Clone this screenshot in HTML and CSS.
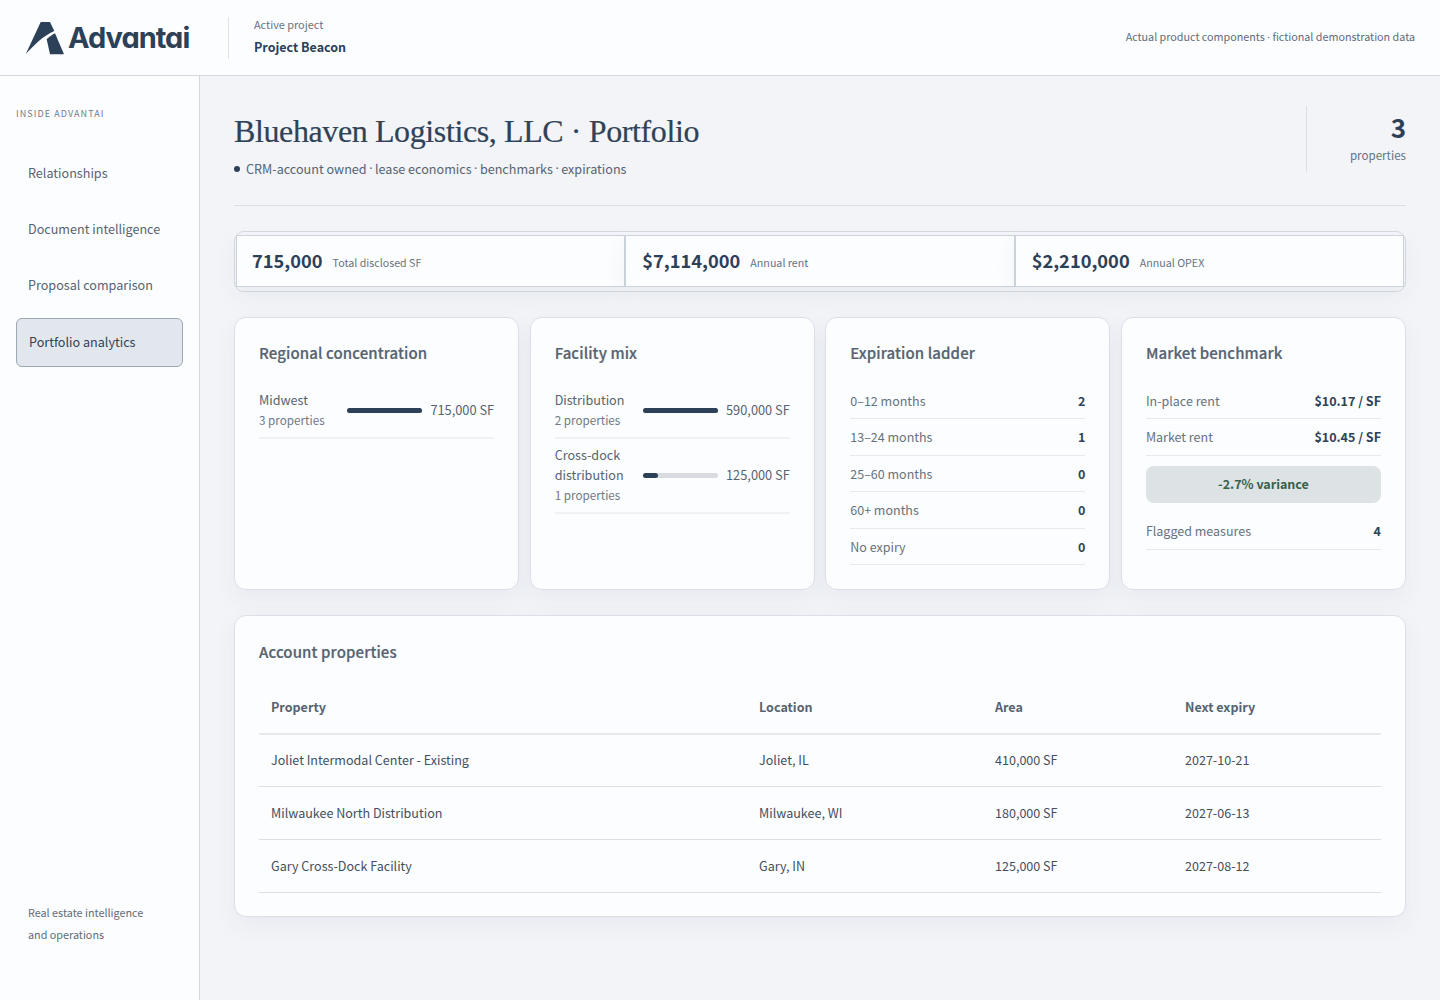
FILE: index.html
```html
<!DOCTYPE html>
<html lang="en">

<head>
  <meta charset="UTF-8">
  <title>Advantai - Portfolio analytics</title>
  <link rel="stylesheet" href="styles.css">
</head>

<body>
  <!-- Top bar -->
  <header class="topbar">
    <div class="logo">
      <svg class="logo-mark" width="40" height="34" viewBox="0 0 40 34">
        <path d="M0.700 33.300 L15.700 1 L25 1 L29.300 10 C18 15 9 24 0.700 33.300 Z" fill="#2c4058" />
        <path d="M30 12.300 L39 33.300 L25 33.300 L21.700 18.300 C24 16 27 14 30 12.300 Z" fill="#2c4058" />
      </svg>
      <span class="logo-text">Advantai</span>
    </div>
    <div class="project">
      <span class="project-label">Active project</span>
      <strong class="project-name">Project Beacon</strong>
    </div>
    <p class="topbar-note">Actual product components <span class="sep">·</span> fictional demonstration data</p>
  </header>

  <div class="layout">
    <!-- Side navigation -->
    <aside class="sidebar">
      <p class="nav-title">INSIDE ADVANTAI</p>
      <nav class="nav">
        <a class="nav-item">Relationships</a>
        <a class="nav-item">Document intelligence</a>
        <a class="nav-item">Proposal comparison</a>
        <a class="nav-item active">Portfolio analytics</a>
      </nav>
      <p class="sidebar-foot">Real estate intelligence<br>and operations</p>
    </aside>

    <main class="main">
      <section class="page-head">
        <div>
          <h1>Bluehaven Logistics, LLC · Portfolio</h1>
          <p class="subtitle"><span class="dot"></span>CRM-account owned <span class="sep">·</span> lease economics <span class="sep">·</span> benchmarks <span class="sep">·</span> expirations</p>
        </div>
        <div class="head-stat">
          <strong>3</strong>
          <span>properties</span>
        </div>
      </section>

      <!-- Totals strip -->
      <section class="totals">
        <div class="total"><strong>715,000</strong><span>Total disclosed SF</span></div>
        <div class="total"><strong>$7,114,000</strong><span>Annual rent</span></div>
        <div class="total"><strong>$2,210,000</strong><span>Annual OPEX</span></div>
      </section>

      <section class="cards">
        <div class="card">
          <h2>Regional concentration</h2>
          <div class="bar-row">
            <div class="bar-label">Midwest<small>3 properties</small></div>
            <div class="bar"><div class="bar-fill" style="width: 100%"></div></div>
            <div class="bar-value">715,000 SF</div>
          </div>
        </div>

        <div class="card">
          <h2>Facility mix</h2>
          <div class="bar-row">
            <div class="bar-label">Distribution<small>2 properties</small></div>
            <div class="bar"><div class="bar-fill" style="width: 100%"></div></div>
            <div class="bar-value">590,000 SF</div>
          </div>
          <div class="bar-row">
            <div class="bar-label">Cross-dock distribution<small>1 properties</small></div>
            <div class="bar"><div class="bar-fill" style="width: 21%"></div></div>
            <div class="bar-value">125,000 SF</div>
          </div>
        </div>

        <div class="card">
          <h2>Expiration ladder</h2>
          <div class="stat-row"><span>0–12 months</span><b>2</b></div>
          <div class="stat-row"><span>13–24 months</span><b>1</b></div>
          <div class="stat-row"><span>25–60 months</span><b>0</b></div>
          <div class="stat-row"><span>60+ months</span><b>0</b></div>
          <div class="stat-row"><span>No expiry</span><b>0</b></div>
        </div>

        <div class="card">
          <h2>Market benchmark</h2>
          <div class="stat-row"><span>In-place rent</span><b>$10.17 / SF</b></div>
          <div class="stat-row"><span>Market rent</span><b>$10.45 / SF</b></div>
          <div class="variance">-2.7% variance</div>
          <div class="stat-row"><span>Flagged measures</span><b>4</b></div>
        </div>
      </section>

      <!-- Property table -->
      <section class="card table-card">
        <h2>Account properties</h2>
        <table>
          <thead>
            <tr>
              <th class="col-property">Property</th>
              <th class="col-location">Location</th>
              <th class="col-area">Area</th>
              <th>Next expiry</th>
            </tr>
          </thead>
          <tbody>
            <tr>
              <td>Joliet Intermodal Center - Existing</td>
              <td>Joliet, IL</td>
              <td>410,000 SF</td>
              <td>2027-10-21</td>
            </tr>
            <tr>
              <td>Milwaukee North Distribution</td>
              <td>Milwaukee, WI</td>
              <td>180,000 SF</td>
              <td>2027-06-13</td>
            </tr>
            <tr>
              <td>Gary Cross-Dock Facility</td>
              <td>Gary, IN</td>
              <td>125,000 SF</td>
              <td>2027-08-12</td>
            </tr>
          </tbody>
        </table>
      </section>
    </main>
  </div>
</body>

</html>
```

FILE: styles.css
```css
* {
  box-sizing: border-box;
}

body {
  margin: 0;
  height: 1000px;
  overflow: hidden;
  font-family: "Noto Sans CJK SC", "Noto Sans", sans-serif;
  color: #2c4058;
  background-color: #f2f4f8;
}

p,
h1,
h2 {
  margin: 0;
}

/* the CJK font has a very wide middle dot */
.sep {
  font-family: "Open Sans", sans-serif;
}

.topbar {
  display: flex;
  align-items: center;
  height: 76px;
  padding: 0 25px;
  background-color: #fcfdfe;
  border-bottom: 1px solid #d5d9df;
}

.logo {
  display: flex;
  align-items: center;
  gap: 3px;
  width: 204px;
  height: 42px;
  border-right: 1px solid #dfe3e8;
}

.logo-text {
  font-family: Inter, sans-serif;
  font-size: 29px;
  font-weight: 700;
  font-feature-settings: "cv11";
  letter-spacing: -1px;
  color: #2c4058;
}

.project {
  display: flex;
  flex-direction: column;
  gap: 4px;
  margin-left: 25px;
  margin-bottom: 2px;
}

.project-label {
  font-size: 10.900px;
  line-height: 17px;
  color: #66727f;
}

.project-name {
  font-size: 12.500px;
  line-height: 20px;
  font-weight: 700;
}

.topbar-note {
  margin-left: auto;
  margin-bottom: 3px;
  font-size: 10.750px;
  color: #5f6c7a;
}

.layout {
  display: flex;
  height: 924px;
}

.sidebar {
  display: flex;
  flex-direction: column;
  flex: none;
  width: 200px;
  padding: 31px 16px 55px;
  background-color: #fcfdfe;
  border-right: 1px solid #d5d9df;
}

.nav-title {
  font-size: 9px;
  line-height: 14px;
  letter-spacing: 1.080px;
  color: #6f7a86;
}

.nav {
  display: flex;
  flex-direction: column;
  margin-top: 28px;
}

.nav-item {
  display: flex;
  align-items: center;
  height: 48px;
  margin-bottom: 8px;
  padding: 0 12px 2px;
  font-size: 12.600px;
  color: #566372;
}

.nav-item.active {
  height: 49px;
  margin-top: 1px;
  color: #2f4257;
  background-color: #e1e7ed;
  border: 1px solid #9ca8b4;
  border-radius: 6px;
}

.sidebar-foot {
  margin-top: auto;
  padding-left: 12px;
  font-size: 10.800px;
  line-height: 22px;
  color: #5f6c7a;
}

.main {
  flex: 1;
  padding: 30px 34px 0;
}

.page-head {
  display: flex;
  justify-content: space-between;
  height: 100px;
  border-bottom: 1px solid #dcdfe5;
}

h1 {
  font-family: "Liberation Serif", serif;
  font-size: 32px;
  line-height: 50px;
  font-weight: 400;
  letter-spacing: -0.390px;
  -webkit-text-stroke: 0.2px #2f4257;
  color: #2f4257;
}

.subtitle {
  display: flex;
  align-items: center;
  gap: 2.500px;
  margin-top: 3px;
  font-size: 12.600px;
  line-height: 20px;
  color: #566372;
}

.dot {
  width: 6px;
  height: 6px;
  margin-right: 3.500px;
  background-color: #2c4058;
  border-radius: 50%;
}

.head-stat {
  display: flex;
  flex-direction: column;
  align-items: flex-end;
  width: 100px;
  height: 66px;
  padding-top: 3px;
  border-left: 1px solid #dcdfe5;
}

.head-stat strong {
  font-size: 26px;
  line-height: 36px;
  font-weight: 700;
}

.head-stat span {
  font-size: 11.600px;
  line-height: 20px;
  color: #66727f;
}

.totals {
  display: grid;
  grid-template-columns: repeat(3, 1fr);
  margin-top: 25px;
  height: 61px;
  padding: 3px 1px 4px;
  background-color: #f4f6f9;
  border: 1px solid #d5dae0;
  border-radius: 10px;
}

.total {
  display: flex;
  align-items: center;
  gap: 10px;
  padding: 0 16px 2px;
  background-color: #fcfdfe;
  border: 1px solid #ccd3da;
  box-shadow: 0 8px 24px rgba(44, 64, 88, 0.06);
}

.total:first-child {
  padding-left: 15px;
}

.total strong {
  font-size: 18.250px;
  font-weight: 700;
}

.total span {
  padding-top: 4px;
  font-size: 10.700px;
  color: #66727f;
}

.cards {
  display: grid;
  grid-template-columns: repeat(4, 1fr);
  gap: 10.500px;
  margin-top: 25px;
}

.card {
  height: 273px;
  padding: 23px 24px;
  background-color: #fcfdfe;
  border: 1px solid #dcdfe5;
  border-radius: 12px;
  box-shadow: 0 8px 24px rgba(44, 64, 88, 0.06);
}

h2 {
  margin-bottom: 17.500px;
  font-size: 15px;
  line-height: 24px;
  font-weight: 500;
  letter-spacing: 0.100px;
  -webkit-text-stroke: 0.2px #566372;
  color: #566372;
}

.bar-row {
  display: grid;
  grid-template-columns: 80px 1fr auto;
  gap: 0 8px;
  align-items: center;
  padding: 6.500px 0 6px;
  border-bottom: 2px solid #f0f2f5;
}

.bar-row:first-of-type {
  padding-top: 7.500px;
}

.bar-label {
  font-size: 12.600px;
  line-height: 20px;
  color: #566372;
}

.bar-label small {
  display: block;
  font-size: 11.700px;
  line-height: 20.500px;
  color: #6f7a86;
}

.bar {
  height: 5px;
  background-color: #d8dce1;
  border-radius: 3px;
}

.bar-fill {
  height: 100%;
  background-color: #2c4058;
  border-radius: 3px;
}

.bar-value {
  padding-bottom: 1px;
  font-size: 12.800px;
  color: #566372;
}

.stat-row {
  display: flex;
  justify-content: space-between;
  align-items: center;
  height: 36.500px;
  font-size: 12.500px;
  color: #66727f;
  border-bottom: 1px solid #e6e9ed;
}

.stat-row b {
  font-size: 12.500px;
  font-weight: 700;
  color: #2f4257;
}

.variance {
  display: flex;
  align-items: center;
  justify-content: center;
  height: 37px;
  margin: 10px 0 10.500px;
  padding-bottom: 1px;
  font-size: 12.500px;
  font-weight: 700;
  color: #36604c;
  background-color: #dde3e4;
  border-radius: 8px;
}

.table-card {
  height: 302px;
  margin-top: 25px;
  padding-top: 24px;
}

.table-card h2 {
  margin-bottom: 16px;
}

table {
  width: 100%;
  border-collapse: collapse;
  font-size: 12.550px;
}

th,
td {
  padding: 0 12px;
  text-align: left;
  border-bottom: 1px solid #dcdfe5;
}

th {
  height: 53.500px;
  font-weight: 700;
  color: #566372;
  border-bottom: 2px solid #e6e9ed;
}

td {
  height: 53px;
  padding-bottom: 2px;
  color: #444f5c;
}

.col-property {
  width: 488px;
}

.col-location {
  width: 236px;
}

.col-area {
  width: 190px;
}
```
